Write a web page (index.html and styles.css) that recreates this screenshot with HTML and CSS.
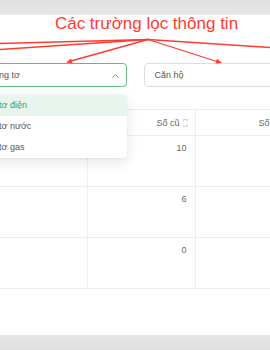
FILE: index.html
```html
<!DOCTYPE html>
<html lang="vi">
<head>
<meta charset="utf-8">
<link rel="stylesheet" href="styles.css">
</head>
<body>
  <div class="bar"></div>
  <main class="page">
    <div class="note">Các trường lọc thông tin</div>
    <div class="filters">
      <div class="select select-active">
        <span class="select-text">Công tơ</span>
        <svg class="chev" width="7" height="4" viewBox="0 0 7 4"><polyline points="0.5,3.5 3.5,0.8 6.5,3.5" fill="none" stroke="#8a8a8a" stroke-width="1"/></svg>
        <ul class="dropdown">
          <li class="opt opt-on">Công tơ điện</li>
          <li class="opt">Công tơ nước</li>
          <li class="opt">Công tơ gas</li>
        </ul>
      </div>
      <div class="select">
        <span class="select-text">Căn hộ</span>
      </div>
    </div>
    <table class="grid">
      <colgroup><col class="c1"><col class="c2"><col class="c3"></colgroup>
      <thead>
        <tr><th>Căn hộ</th><th><span>Số cũ</span><i class="sort"></i></th><th><span>Số mới</span><i class="sort"></i></th></tr>
      </thead>
      <tbody>
        <tr><td></td><td>10</td><td></td></tr>
        <tr><td></td><td>6</td><td></td></tr>
        <tr><td></td><td>0</td><td></td></tr>
      </tbody>
    </table>
  </main>
  <div class="bar bar-bottom"></div>
  <svg class="arrows" width="270" height="70" viewBox="0 0 270 70">
    <g stroke="#ff3b2f" stroke-width="1.3" fill="none" stroke-linecap="round">
      <line x1="148" y1="39.5" x2="0" y2="43.5"/>
      <line x1="148" y1="39.5" x2="0" y2="49.5"/>
      <line x1="148" y1="39.5" x2="71" y2="61"/>
      <line x1="148" y1="39.5" x2="217" y2="61.5"/>
      <line x1="148" y1="39.5" x2="270" y2="47.5"/>
    </g>
    <polygon fill="#ff3b2f" points="66,62.5 71.1,58.5 72.4,63.3"/>
    <polygon fill="#ff3b2f" points="222,63 215.5,63.6 217,58.8"/>
  </svg>
</body>
</html>
```
FILE: styles.css
```css
html, body {
  margin: 0;
  padding: 0;
  width: 270px;
  height: 350px;
  overflow: hidden;
  background: #ffffff;
  font-family: "Liberation Sans", Arial, sans-serif;
}
body {
  position: relative;
}
.bar {
  height: 15px;
  background: linear-gradient(#e0e0e0, #e8e8e8);
}
.bar-bottom {
  background: linear-gradient(#e6e6e6, #e0e0e0);
}
.page {
  height: 320px;
  background: #ffffff;
  position: relative;
  overflow: hidden;
}
.note {
  font-size: 17px;
  line-height: 15px;
  padding-top: 1px;
  margin-bottom: -1px;
  color: #ff3b2f;
  text-align: center;
  padding-left: 23px;
  white-space: nowrap;
}
.filters {
  display: flex;
  gap: 17px;
  margin-top: 33px;
  margin-left: -19.5px;
}
.select {
  position: relative;
  box-sizing: border-box;
  height: 24px;
  width: 150px;
  flex: none;
  border: 1px solid #dcdde2;
  border-radius: 4px;
  display: flex;
  align-items: center;
  padding-left: 10px;
  font-size: 9px;
  color: #555;
}
.select-active {
  width: 146px;
  padding-left: 6px;
  border-color: #63b982;
}
.chev {
  position: absolute;
  right: 7px;
  top: 10px;
}
.dropdown {
  position: absolute;
  top: 31px;
  left: -16.5px;
  right: -1px;
  margin: 0;
  padding: 0;
  list-style: none;
  background: #fff;
  border-radius: 4px;
  box-shadow: 0 4px 14px rgba(0, 0, 0, 0.10), 0 1px 3px rgba(0, 0, 0, 0.05);
  z-index: 2;
  overflow: hidden;
}
.opt {
  height: 21px;
  line-height: 21px;
  padding-left: 10px;
  font-size: 9px;
  color: #555;
  white-space: nowrap;
}
.opt-on {
  background: #e8f5ec;
  color: #3f9a62;
}
.grid {
  margin-top: 22px;
  border-collapse: collapse;
  table-layout: fixed;
  width: 303px;
  font-size: 9px;
  color: #666;
}
.c1 { width: 87px; }
.c2 { width: 108px; }
.c3 { width: 108px; }
.grid th {
  height: 25px;
  padding: 0 7px 0 0;
  font-weight: normal;
  text-align: right;
  border-top: 1px solid #eceef2;
  border-bottom: 1px solid #eceef2;
  border-right: 1px solid #eceef2;
  white-space: nowrap;
  color: #666;
}
.grid td {
  height: 51px;
  padding: 7px 8px 0 0;
  vertical-align: top;
  text-align: right;
  border-bottom: 1px solid #eceef2;
  border-right: 1px solid #eceef2;
  box-sizing: border-box;
  line-height: 10px;
}
.sort {
  display: inline-block;
  width: 5px;
  height: 8px;
  margin-left: 3px;
  vertical-align: -1px;
  background:
    linear-gradient(to top left, transparent 50%, #cfd0d4 50%) 0 0 / 2.5px 3px no-repeat,
    linear-gradient(to top right, transparent 50%, #cfd0d4 50%) 2.5px 0 / 2.5px 3px no-repeat,
    linear-gradient(to bottom left, transparent 50%, #cfd0d4 50%) 0 5px / 2.5px 3px no-repeat,
    linear-gradient(to bottom right, transparent 50%, #cfd0d4 50%) 2.5px 5px / 2.5px 3px no-repeat;
}
.arrows {
  position: absolute;
  top: 0;
  left: 0;
  z-index: 5;
}
```
